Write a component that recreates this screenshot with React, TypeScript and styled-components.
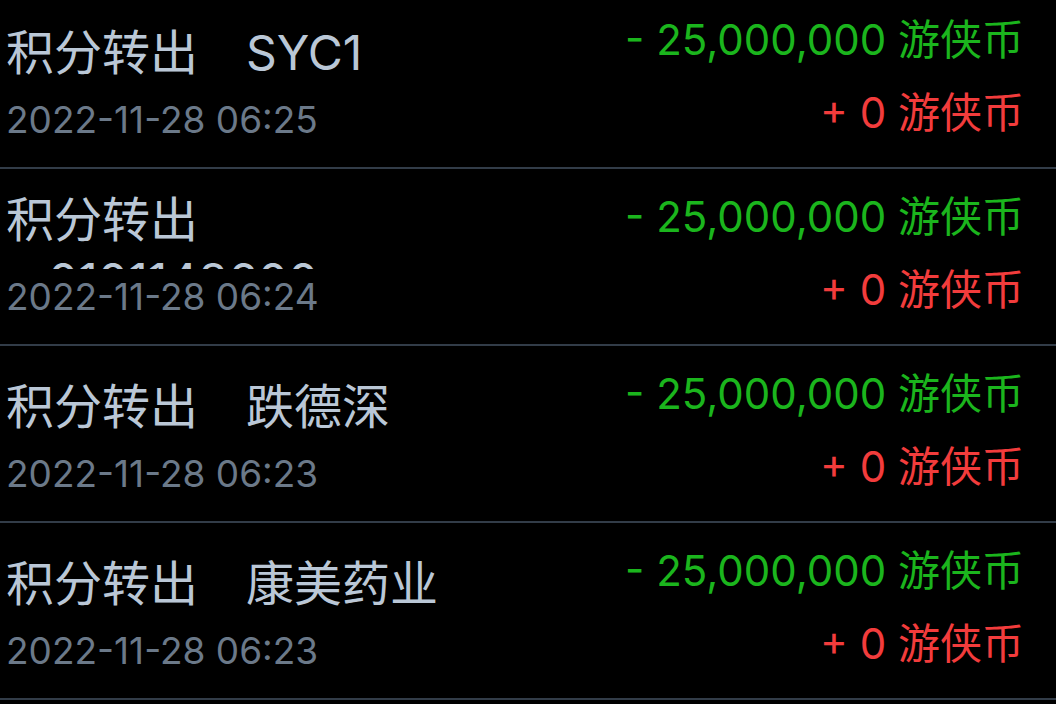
import styled, { createGlobalStyle } from 'styled-components';

type Entry = {
  id: number;
  name: string;
  time: string;
  spent: string;
  gained: string;
};

const entries: Entry[] = [
  { id: 1, name: 'SYC1', time: '2022-11-28 06:25', spent: '25,000,000', gained: '0' },
  { id: 2, name: 'm0101148600', time: '2022-11-28 06:24', spent: '25,000,000', gained: '0' },
  { id: 3, name: '跌德深', time: '2022-11-28 06:23', spent: '25,000,000', gained: '0' },
  { id: 4, name: '康美药业', time: '2022-11-28 06:23', spent: '25,000,000', gained: '0' },
];

const App = () => {
  return (
    <>
      <GlobalStyle />
      <Screen>
        <List>
          {entries.map((e) => (
            <Row key={e.id}>
              <Info>
                <TitleBox>
                  <Title>积分转出　{e.name}</Title>
                </TitleBox>
                <Time>{e.time}</Time>
              </Info>
              <Amounts>
                <Amount $tone="out">- {e.spent} 游侠币</Amount>
                <Amount $tone="in">+ {e.gained} 游侠币</Amount>
              </Amounts>
            </Row>
          ))}
        </List>
      </Screen>
    </>
  );
};

export default App;

/* ---------------- styled-components ---------------- */

const GlobalStyle = createGlobalStyle`
  * {
    box-sizing: border-box;
  }

  html, body {
    margin: 0;
    padding: 0;
    background: #000;
  }

  body {
    font-family: Inter, 'Noto Sans CJK SC', 'Noto Sans', sans-serif;
  }
`;

const Screen = styled.div`
  width: 1056px;
  height: 704px;
  overflow: hidden;
  background: #000;
`;

// list is scrolled a little, first row sits partly above the top edge
const List = styled.ul`
  list-style: none;
  margin: -8px 0 0;
  padding: 0;
`;

const Row = styled.li`
  height: 177px;
  display: grid;
  grid-template-columns: 1fr 1fr;
  padding: 0 32px 0 6px;
  border-bottom: 2px solid #323c48;
`;

const Info = styled.div`
  min-width: 0;
  display: flex;
  flex-direction: column;
  padding-top: 20px;
`;

// long names wrap and get cut off under the first line
const TitleBox = styled.div`
  height: 80px;
  overflow: hidden;
  display: flex;
  flex-direction: column;
  justify-content: safe center;
`;

const Title = styled.div`
  font-size: 48px;
  line-height: 61px;
  color: #bac7d6;
  flex-shrink: 0;
`;

const Time = styled.div`
  margin-top: 8px;
  font-size: 37px;
  line-height: 40px;
  color: #6b7989;
`;

const Amounts = styled.div`
  display: flex;
  flex-direction: column;
  align-items: flex-end;
  padding-top: 11px;
`;

const Amount = styled.div<{ $tone: 'out' | 'in' }>`
  font-size: 42px;
  line-height: 73px;
  white-space: nowrap;
  color: ${({ $tone }) => ($tone === 'out' ? '#1bb51d' : '#f23c3c')};
`;
